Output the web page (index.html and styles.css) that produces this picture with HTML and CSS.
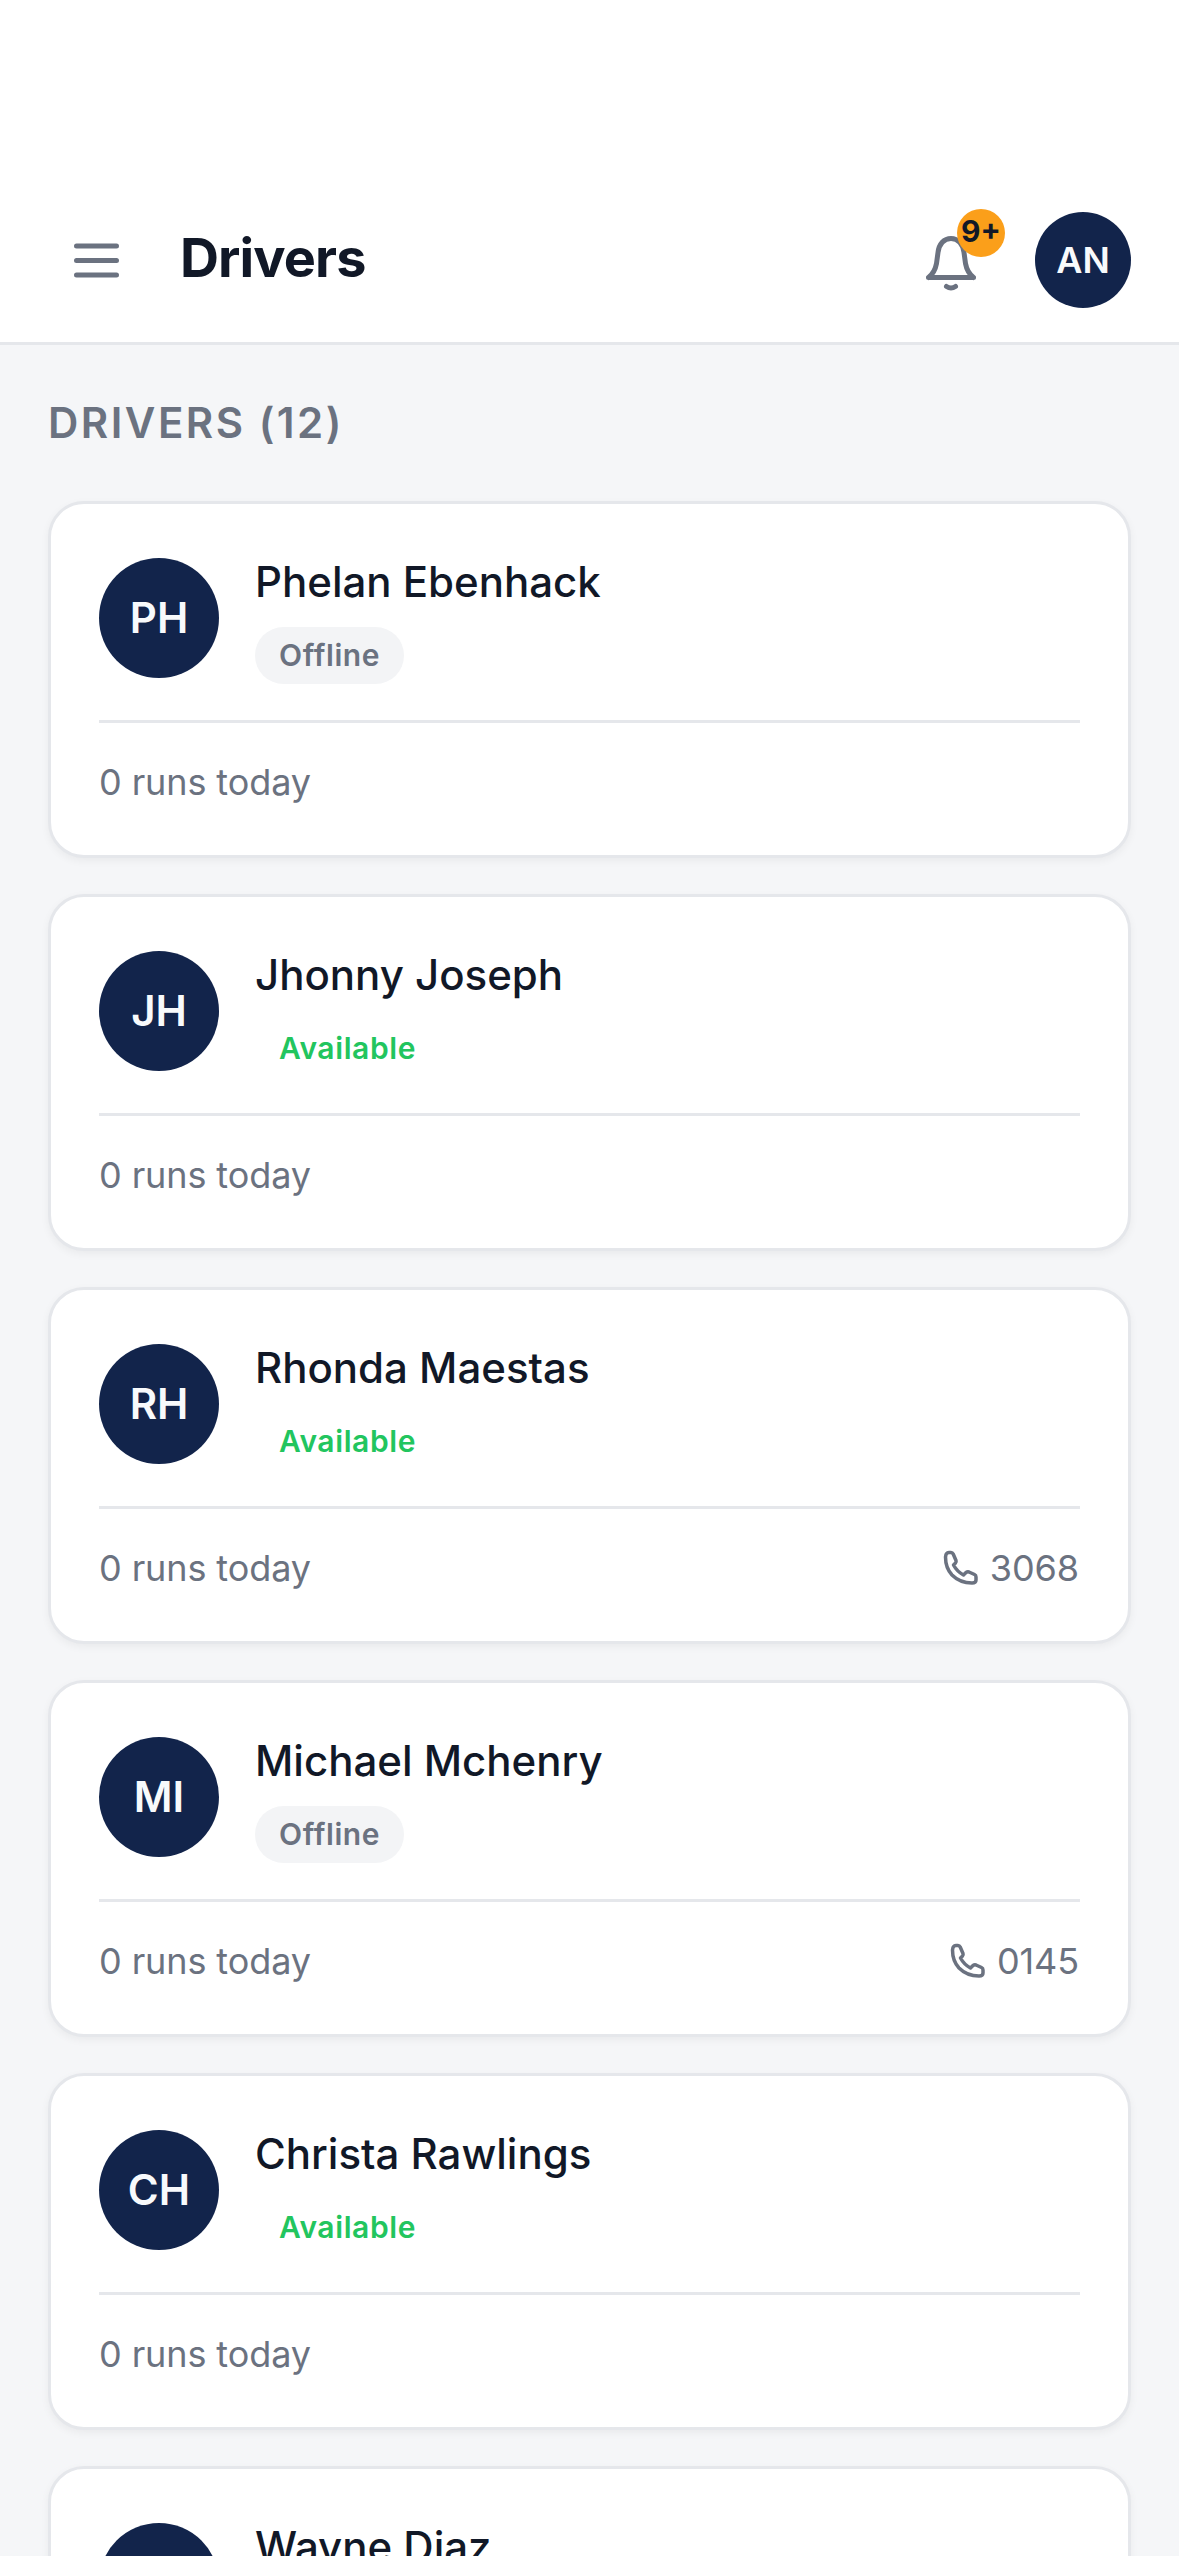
FILE: index.html
```html
<!DOCTYPE html>
<html lang="en">
<head>
  <meta charset="UTF-8">
  <meta name="viewport" content="width=device-width, initial-scale=1.0">
  <title>Drivers</title>
  <link rel="stylesheet" href="styles.css">
</head>
<body>
  <header class="topbar">
    <button class="menu-btn" aria-label="Menu">
      <svg viewBox="0 0 45 35" width="45" height="35"><path d="M2.5 3h40M2.5 17.5h40M2.5 32h40"/></svg>
    </button>
    <h1>Drivers</h1>
    <div class="bell">
      <svg viewBox="0 0 50 55" width="50" height="55"><path d="M2.5 41.5h45M2.5 41.5c5-4 7-8.500 8-14l1.500-11c1-8.500 6-14 13-14s12 5.500 13 14l1.500 11c1 5.500 3 10 8 14"/><path d="M20.500 50.500q4.500 3 9 0"/></svg>
      <span class="bell-count">9+</span>
    </div>
    <div class="user-avatar">AN</div>
  </header>

  <main>
    <h2 class="list-title">DRIVERS (12)</h2>

    <section class="card">
      <div class="card-top">
        <div class="avatar">PH</div>
        <div class="card-info">
          <div class="name">Phelan Ebenhack</div>
          <span class="status offline">Offline</span>
        </div>
      </div>
      <div class="card-bottom"><span>0 runs today</span></div>
    </section>

    <section class="card">
      <div class="card-top">
        <div class="avatar">JH</div>
        <div class="card-info">
          <div class="name">Jhonny Joseph</div>
          <span class="status available">Available</span>
        </div>
      </div>
      <div class="card-bottom"><span>0 runs today</span></div>
    </section>

    <section class="card">
      <div class="card-top">
        <div class="avatar">RH</div>
        <div class="card-info">
          <div class="name">Rhonda Maestas</div>
          <span class="status available">Available</span>
        </div>
      </div>
      <div class="card-bottom">
        <span>0 runs today</span>
        <span class="phone">
          <svg viewBox="0 0 36 36" width="36" height="36"><path d="M3 4.500Q4 2.500 6 2.500H8Q9.500 2.500 10.200 4L13 10.500Q13.500 12 12.500 13L10.500 15Q14 21.500 20.500 25L23 22.500Q24.500 21.500 26 22L31.500 24.500Q33 25.200 33 27V30Q33 33 29 33Q17 33 9 25Q2.500 18 2.500 7Z"/></svg>
          3068
        </span>
      </div>
    </section>

    <section class="card">
      <div class="card-top">
        <div class="avatar">MI</div>
        <div class="card-info">
          <div class="name">Michael Mchenry</div>
          <span class="status offline">Offline</span>
        </div>
      </div>
      <div class="card-bottom">
        <span>0 runs today</span>
        <span class="phone">
          <svg viewBox="0 0 36 36" width="36" height="36"><path d="M3 4.500Q4 2.500 6 2.500H8Q9.500 2.500 10.200 4L13 10.500Q13.500 12 12.500 13L10.500 15Q14 21.500 20.500 25L23 22.500Q24.500 21.500 26 22L31.500 24.500Q33 25.200 33 27V30Q33 33 29 33Q17 33 9 25Q2.500 18 2.500 7Z"/></svg>
          0145
        </span>
      </div>
    </section>

    <section class="card">
      <div class="card-top">
        <div class="avatar">CH</div>
        <div class="card-info">
          <div class="name">Christa Rawlings</div>
          <span class="status available">Available</span>
        </div>
      </div>
      <div class="card-bottom"><span>0 runs today</span></div>
    </section>

    <section class="card">
      <div class="card-top">
        <div class="avatar">WA</div>
        <div class="card-info">
          <div class="name">Wayne Diaz</div>
          <span class="status available">Available</span>
        </div>
      </div>
      <div class="card-bottom"><span>0 runs today</span></div>
    </section>
  </main>
</body>
</html>
```

FILE: styles.css
```css
html, body {
  height: 2556px;
  overflow: hidden;
}
body {
  font-family: Inter, 'Noto Sans', sans-serif;
  margin: 0;
  background-color: #f5f6f8;
  color: #111827;
}
.topbar {
  display: flex;
  align-items: center;
  box-sizing: border-box;
  height: 345px;
  padding: 178px 48px 0 74px;
  background: #fff;
  border-bottom: 3px solid #e5e7eb;
}
.menu-btn {
  display: flex;
  padding: 0;
  border: none;
  background: none;
}
.menu-btn svg {
  fill: none;
  stroke: #6b7280;
  stroke-width: 5;
  stroke-linecap: round;
}
h1 {
  margin: 0 0 5px 61px;
  font-size: 54px;
  font-weight: 700;
  letter-spacing: -0.9px;
}
.bell {
  position: relative;
  display: flex;
  margin-left: auto;
  margin-right: 59px;
  margin-top: 6px;
}
.bell svg {
  fill: none;
  stroke: #6b7280;
  stroke-width: 5;
  stroke-linecap: round;
  stroke-linejoin: round;
}
.bell-count {
  position: absolute;
  top: -27px;
  right: -29px;
  width: 48px;
  height: 48px;
  border-radius: 50%;
  background: #fb9f1a;
  color: #111827;
  font-size: 30px;
  font-weight: 700;
  line-height: 44px;
  text-align: center;
}
.user-avatar {
  width: 96px;
  height: 96px;
  border-radius: 50%;
  background: #12244b;
  color: #f8fafc;
  font-size: 36px;
  font-weight: 600;
  line-height: 96px;
  text-align: center;
}
main {
  padding: 0 48px;
}
.list-title {
  margin: 54px 0;
  font-size: 42px;
  line-height: 48px;
  font-weight: 600;
  letter-spacing: 2.5px;
  color: #6b7280;
}
.card {
  box-sizing: border-box;
  height: 357px;
  margin-top: 36px;
  padding: 48px;
  background: #fff;
  border: 3px solid #e5e7eb;
  border-radius: 36px;
  box-shadow: 0 3px 9px rgba(0,0,0,0.05);
}
.list-title + .card {
  margin-top: 0;
}
.card-top {
  display: flex;
  align-items: center;
  gap: 36px;
  padding-bottom: 36px;
  border-bottom: 3px solid #e5e7eb;
}
.avatar {
  width: 120px;
  height: 120px;
  flex-shrink: 0;
  border-radius: 50%;
  background: #12244b;
  color: #f8fafc;
  font-size: 42px;
  font-weight: 600;
  line-height: 120px;
  text-align: center;
}
.name {
  font-size: 42px;
  font-weight: 500;
  line-height: 60px;
  margin-bottom: 15px;
}
.status {
  display: inline-block;
  padding: 0 24px;
  height: 57px;
  border-radius: 29px;
  font-size: 30px;
  font-weight: 600;
  letter-spacing: 0.6px;
  line-height: 57px;
}
.offline {
  background: #f3f4f6;
  color: #6b7280;
}
.available {
  color: #22c55e;
}
.card-bottom {
  display: flex;
  justify-content: space-between;
  align-items: center;
  padding-top: 35px;
  font-size: 36px;
  letter-spacing: -0.1px;
  line-height: 48px;
  color: #6b7280;
}
.phone {
  display: flex;
  align-items: center;
  gap: 11px;
  margin-right: 1px;
}
.phone svg {
  fill: none;
  stroke: #6b7280;
  stroke-width: 3.5;
  stroke-linejoin: round;
}
```
